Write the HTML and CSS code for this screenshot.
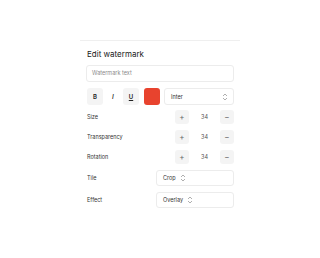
FILE: index.html
```html
<!DOCTYPE html>
<html>
<head>
<meta charset="utf-8">
<link rel="stylesheet" href="styles.css">
</head>
<body>
<div class="card">
  <div class="title">Edit watermark</div>
  <div class="input">Watermark text</div>
  <div class="toolbar">
    <div class="tbtn b">B</div>
    <div class="tbtn i">I</div>
    <div class="tbtn u">U</div>
    <div class="swatch"></div>
    <div class="select grow">Inter
      <svg class="chev" width="6" height="8" viewBox="0 0 6 8"><path d="M1 3 L3 1 L5 3 M1 5 L3 7 L5 5" fill="none" stroke="#9a9a9a" stroke-width="0.8"/></svg>
    </div>
  </div>
  <div class="row">
    <span class="label">Size</span>
    <div class="stepper"><div class="sbtn">+</div><span class="val">34</span><div class="sbtn">−</div></div>
  </div>
  <div class="row">
    <span class="label">Transparency</span>
    <div class="stepper"><div class="sbtn">+</div><span class="val">34</span><div class="sbtn">−</div></div>
  </div>
  <div class="row">
    <span class="label">Rotation</span>
    <div class="stepper"><div class="sbtn">+</div><span class="val">34</span><div class="sbtn">−</div></div>
  </div>
  <div class="row srow">
    <span class="label">Tile</span>
    <div class="select wide">Crop
      <svg class="chev2" width="6" height="8" viewBox="0 0 6 8"><path d="M1 3 L3 1 L5 3 M1 5 L3 7 L5 5" fill="none" stroke="#9a9a9a" stroke-width="0.8"/></svg>
    </div>
  </div>
  <div class="row srow">
    <span class="label">Effect</span>
    <div class="select wide">Overlay
      <svg class="chev2" width="6" height="8" viewBox="0 0 6 8"><path d="M1 3 L3 1 L5 3 M1 5 L3 7 L5 5" fill="none" stroke="#9a9a9a" stroke-width="0.8"/></svg>
    </div>
  </div>
</div>
</body>
</html>
```
FILE: styles.css
```css
* { box-sizing: border-box; }
body {
  margin: 0;
  background: #fff;
  font-family: Inter, "Liberation Sans", sans-serif;
  color: #222;
}
.card {
  margin: 40px 0 0 80px;
  width: 160px;
  border-top: 1px solid #efefef;
  padding: 6px 6px 0 6px;
}
.title {
  font-size: 8px;
  font-weight: 400;
  color: #1a1a1a;
  padding: 0 1px;
  height: 14px;
  line-height: 14px;
}
.input {
  margin-top: 4px;
  height: 17px;
  border: 1px solid #ececec;
  border-radius: 3px;
  font-size: 5.5px;
  color: #8a8a8a;
  line-height: 15px;
  padding-left: 5px;
}
.toolbar {
  margin-top: 6px;
  display: flex;
  gap: 2px;
  height: 17px;
  padding-left: 1px;
}
.tbtn {
  width: 16px;
  height: 17px;
  background: #f4f4f4;
  border-radius: 3px;
  display: flex;
  align-items: center;
  justify-content: center;
  font-size: 6px;
  font-weight: 600;
  color: #222;
}
.tbtn.i { font-style: italic; font-weight: 500; font-size: 6.5px; background: #fff; }
.tbtn.u { text-decoration: underline; }
.swatch {
  width: 16px;
  height: 17px;
  background: #e8432e;
  border-radius: 3px;
  margin-left: 3px;
}
.select {
  height: 17px;
  border: 1px solid #ececec;
  border-radius: 3px;
  font-size: 5.5px;
  color: #333;
  display: flex;
  align-items: center;
  padding-left: 6px;
}
.grow { flex: 1; justify-content: space-between; padding-right: 5px; margin-left: 2px; }
.chev2 { margin-left: 4px; }
.row {
  display: flex;
  align-items: center;
  justify-content: space-between;
  height: 20px;
  padding-left: 1px;
}
.toolbar + .row { margin-top: 2px; }
.label {
  font-size: 5.5px;
  color: #333;
}
.stepper {
  display: flex;
  align-items: center;
}
.sbtn {
  width: 14px;
  height: 14px;
  background: #f4f4f4;
  border-radius: 3px;
  font-size: 8px;
  color: #666;
  display: flex;
  align-items: center;
  justify-content: center;
}
.val {
  width: 31px;
  text-align: center;
  font-size: 5.5px;
  color: #555;
}
.srow { height: 22px; }
.wide { width: 78px; height: 16px; }
```
